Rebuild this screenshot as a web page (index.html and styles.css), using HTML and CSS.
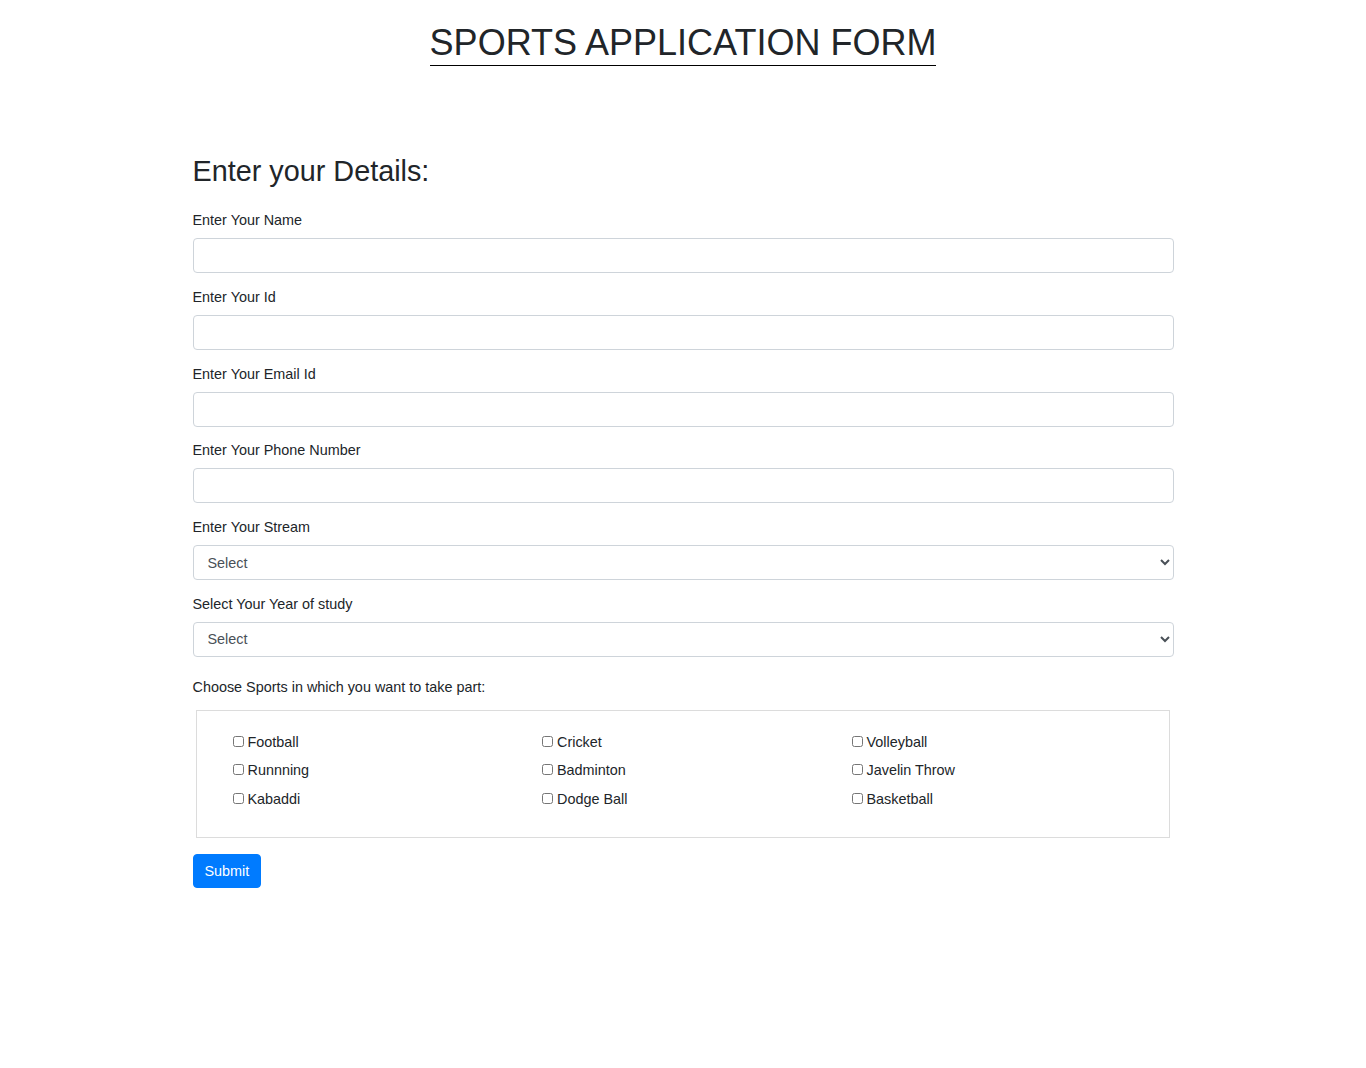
FILE: index.html
```html
<!DOCTYPE html>
<html lang="en">
<head>
<meta charset="utf-8">
<title>Sports Application Form</title>
<link rel="stylesheet" href="styles.css">
</head>
<body>
<h1 class="title"><span class="title-text">SPORTS APPLICATION FORM</span></h1>
<div class="container">
  <h3 class="section-heading">Enter your Details:</h3>
  <form class="form">
    <div class="form-group">
      <label class="label" for="name">Enter Your Name</label>
      <input class="form-control" type="text" id="name">
    </div>
    <div class="form-group">
      <label class="label" for="sid">Enter Your Id</label>
      <input class="form-control" type="text" id="sid">
    </div>
    <div class="form-group">
      <label class="label" for="email">Enter Your Email Id</label>
      <input class="form-control" type="email" id="email">
    </div>
    <div class="form-group">
      <label class="label" for="phone">Enter Your Phone Number</label>
      <input class="form-control" type="text" id="phone">
    </div>
    <div class="form-group">
      <label class="label" for="stream">Enter Your Stream</label>
      <select class="form-control select" id="stream">
        <option>Select</option>
      </select>
    </div>
    <div class="form-group">
      <label class="label" for="year">Select Your Year of study</label>
      <select class="form-control select" id="year">
        <option>Select</option>
      </select>
    </div>
    <div class="sports-label">Choose Sports in which you want to take part:</div>
    <fieldset class="sports-box">
      <div class="sports-grid">
        <label class="check"><input type="checkbox" class="check-input">Football</label>
        <label class="check"><input type="checkbox" class="check-input">Cricket</label>
        <label class="check"><input type="checkbox" class="check-input">Volleyball</label>
        <label class="check"><input type="checkbox" class="check-input">Runnning</label>
        <label class="check"><input type="checkbox" class="check-input">Badminton</label>
        <label class="check"><input type="checkbox" class="check-input">Javelin Throw</label>
        <label class="check"><input type="checkbox" class="check-input">Kabaddi</label>
        <label class="check"><input type="checkbox" class="check-input">Dodge Ball</label>
        <label class="check"><input type="checkbox" class="check-input">Basketball</label>
      </div>
    </fieldset>
    <button type="button" class="btn-submit">Submit</button>
  </form>
</div>
</body>
</html>
```

FILE: styles.css
```css
* {
  box-sizing: border-box;
}

body {
  margin: 0;
  font-family: "Liberation Sans", Arial, sans-serif;
  font-size: 14.4px;
  line-height: 21px;
  color: #212529;
  background: #fff;
}

.title {
  margin: 21px 0 0;
  text-align: center;
  font-size: 36px;
  line-height: 43px;
  font-weight: 400;
}

.title-text {
  padding-bottom: 2.4px;
  border-bottom: 1px solid #000;
}

.container {
  width: 981px;
  margin: 90px auto 0;
}

.section-heading {
  margin: 0 0 21.5px;
  font-size: 28.8px;
  line-height: 34.5px;
  font-weight: 400;
}

.form-group {
  margin-bottom: 13.8px;
}

.label {
  display: block;
  margin-bottom: 7px;
  line-height: 21px;
}

.form-control {
  display: block;
  width: 100%;
  height: 35px;
  padding: 6px 12px;
  font-family: inherit;
  font-size: 14.4px;
  line-height: 21px;
  color: #495057;
  background: #fff;
  border: 1px solid #ced4da;
  border-radius: 4px;
  outline: none;
}

.select {
  padding-left: 10px;
}

.sports-label {
  margin-top: 20px;
  margin-bottom: 12.2px;
  line-height: 21px;
}

.sports-box {
  margin: 0 4px 0 3px;
  padding: 20.8px 0 27.2px 31px;
  border: 1px solid #dcdcdc;
  min-width: 0;
}

.sports-grid {
  display: grid;
  grid-template-columns: repeat(3, 309.5px);
  row-gap: 7.5px;
}

.check {
  display: block;
  line-height: 21px;
  white-space: nowrap;
}

.check-input {
  width: 11px;
  height: 11px;
  margin: 0 4px 0 5px;
  vertical-align: baseline;
}

.btn-submit {
  display: block;
  margin-top: 16px;
  height: 34px;
  padding: 0 11px;
  font-family: inherit;
  font-size: 14.4px;
  line-height: 21px;
  color: #fff;
  background: #007bff;
  border: 1px solid #007bff;
  border-radius: 4px;
}
```
